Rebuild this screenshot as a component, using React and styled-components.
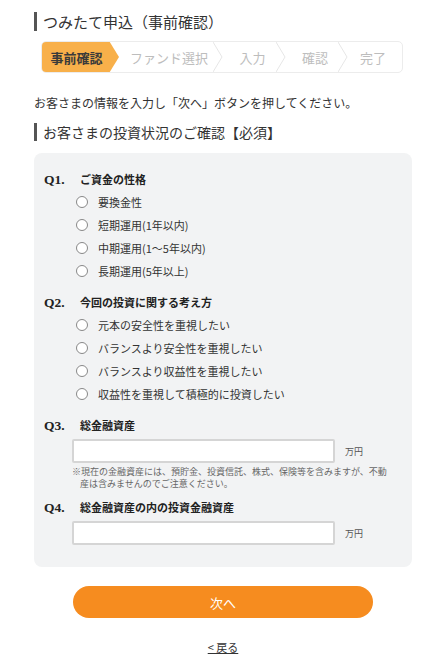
import React from 'react';
import styled, { createGlobalStyle } from 'styled-components';

const GlobalStyle = createGlobalStyle`
  html, body { margin: 0; padding: 0; background: #fff; }
  body {
    font-family: "Noto Sans CJK JP", "Noto Sans", sans-serif;
    color: #333;
  }
`

const Page = styled.div`
  width: 446px;
  padding: 12px 34px 0 34px;
  box-sizing: border-box;
`
const PageTitle = styled.h1`
  margin: 0;
  padding-left: 6px;
  border-left: 3px solid #555;
  font-size: 15px;
  font-weight: normal;
  line-height: 19px;
  color: #333;
`
const Stepper = styled.ol`
  display: flex;
  margin: 10px 0 0 7px;
  padding: 0;
  width: 362px;
  height: 32px;
  list-style: none;
  border: 1px solid #ececec;
  border-radius: 5px;
  box-sizing: border-box;
  overflow: hidden;
`
const Step = styled.li`
  position: relative;
  flex: 0 0 ${p => p.$w}px;
  display: flex;
  align-items: center;
  justify-content: center;
  font-size: 13px;
  color: ${p => (p.$active ? '#3a3a3a' : '#bdbdbd')};
  font-weight: ${p => (p.$active ? 'bold' : 'normal')};
  background: ${p => (p.$active ? '#f8b04a' : 'transparent')};
  clip-path: ${p => (p.$active ? 'polygon(0 0, 88% 0, 100% 50%, 88% 100%, 0 100%)' : 'none')};
  padding-right: ${p => (p.$active ? '8px' : '4px')};
  box-sizing: border-box;
`
const Chevron = styled.svg`
  position: absolute;
  right: 0;
  top: 0;
`
const Lead = styled.p`
  margin: 21px 0 0;
  font-size: 12px;
  color: #333;
`
const SectionTitle = styled.h2`
  margin: 12px 0 0;
  padding-left: 6px;
  border-left: 3px solid #555;
  font-size: 14px;
  font-weight: normal;
  line-height: 18px;
  color: #333;
`
const Panel = styled.div`
  margin-top: 12px;
  padding: 18px 10px 22px 10px;
  background: #f2f3f4;
  border-radius: 8px;
`
const Question = styled.div`
  margin-top: ${p => p.$gap || 0}px;
`
const QHead = styled.div`
  display: flex;
  align-items: baseline;
  font-size: 11px;
  font-weight: bold;
  color: #222;
`
const QNum = styled.span`
  width: 36px;
  font-family: "Liberation Serif", serif;
  font-size: 13.5px;
  font-weight: bold;
`
const Options = styled.div`
  display: flex;
  flex-direction: column;
  gap: 5px;
  margin: 5px 0 0 30px;
`
const Option = styled.label`
  display: flex;
  align-items: center;
  height: 18px;
  font-size: 11px;
  color: #333;
`
const Radio = styled.span`
  width: 10px;
  height: 10px;
  border: 1px solid #888;
  border-radius: 50%;
  background: #fff;
  margin: 0 10px 0 2px;
  flex: none;
`
const InputRow = styled.div`
  display: flex;
  align-items: center;
  margin: 5px 0 0 28px;
`
const TextInput = styled.input`
  width: 263px;
  height: 24px;
  border: 2px solid #d5d5d5;
  border-radius: 2px;
  background: #fff;
  box-sizing: border-box;
`
const Unit = styled.span`
  margin-left: 10px;
  font-size: 9px;
  color: #555;
`
const Note = styled.p`
  margin: 3px 13px 0 28px;
  padding-left: 8px;
  text-indent: -8px;
  font-size: 9px;
  line-height: 12px;
  color: #666;
`
const Actions = styled.div`
  display: flex;
  flex-direction: column;
  align-items: center;
  padding-top: 19px;
`
const NextButton = styled.button`
  width: 300px;
  height: 32px;
  border: none;
  border-radius: 16px;
  background: #f68c1f;
  color: #fff;
  font-family: inherit;
  font-size: 13px;
`
const BackLink = styled.a`
  margin-top: 21px;
  font-size: 11px;
  color: #333;
  text-decoration: underline;
`

const steps = [
  { label: '事前確認', w: 77, active: true },
  { label: 'ファンド選択', w: 104 },
  { label: '入力', w: 63 },
  { label: '確認', w: 62 },
  { label: '完了', w: 54, last: true },
]

const q1 = ['要換金性', '短期運用(1年以内)', '中期運用(1～5年以内)', '長期運用(5年以上)']
const q2 = ['元本の安全性を重視したい', 'バランスより安全性を重視したい', 'バランスより収益性を重視したい', '収益性を重視して積極的に投資したい']

function App() {
  return (
    <Page>
      <GlobalStyle />
      <PageTitle>つみたて申込（事前確認）</PageTitle>
      <Stepper>
        {steps.map(s => (
          <Step key={s.label} $w={s.w} $active={s.active}>
            {s.label}
            {!s.active && !s.last && (
              <Chevron width="10" height="30" viewBox="0 0 10 30">
                <polyline points="0,0 9,15 0,30" fill="none" stroke="#e6e6e6" strokeWidth="1" />
              </Chevron>
            )}
          </Step>
        ))}
      </Stepper>
      <Lead>お客さまの情報を入力し「次へ」ボタンを押してください。</Lead>
      <SectionTitle>お客さまの投資状況のご確認【必須】</SectionTitle>
      <Panel>
        <Question>
          <QHead><QNum>Q1.</QNum>ご資金の性格</QHead>
          <Options>
            {q1.map(o => <Option key={o}><Radio />{o}</Option>)}
          </Options>
        </Question>
        <Question $gap={14}>
          <QHead><QNum>Q2.</QNum>今回の投資に関する考え方</QHead>
          <Options>
            {q2.map(o => <Option key={o}><Radio />{o}</Option>)}
          </Options>
        </Question>
        <Question $gap={14}>
          <QHead><QNum>Q3.</QNum>総金融資産</QHead>
          <InputRow><TextInput /><Unit>万円</Unit></InputRow>
          <Note>※現在の金融資産には、預貯金、投資信託、株式、保険等を含みますが、不動産は含みませんのでご注意ください。</Note>
        </Question>
        <Question $gap={9}>
          <QHead><QNum>Q4.</QNum>総金融資産の内の投資金融資産</QHead>
          <InputRow><TextInput /><Unit>万円</Unit></InputRow>
        </Question>
      </Panel>
      <Actions>
        <NextButton>次へ</NextButton>
        <BackLink href="#">&lt; 戻る</BackLink>
      </Actions>
    </Page>
  )
}

export default App;
